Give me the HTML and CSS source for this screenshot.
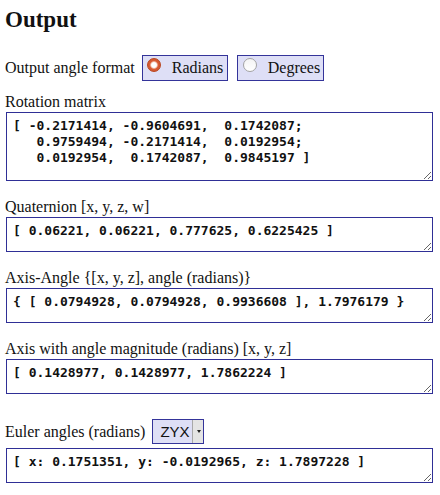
FILE: index.html
```html
<!DOCTYPE html>
<html lang="en">
<head>
<meta charset="utf-8">
<title>Output</title>
<link rel="stylesheet" href="styles.css">
</head>
<body>
<h1 class="title">Output</h1>
<div class="angle-row">
  <span class="row-label">Output angle format</span>
  <label class="opt"><span class="radio checked"></span><span class="opt-text">Radians</span></label>
  <label class="opt"><span class="radio"></span><span class="opt-text">Degrees</span></label>
</div>

<div class="field first">
  <div class="lbl">Rotation matrix</div>
  <textarea class="out tall" spellcheck="false">[ -0.2171414, -0.9604691,  0.1742087;
   0.9759494, -0.2171414,  0.0192954;
   0.0192954,  0.1742087,  0.9845197 ]</textarea>
</div>

<div class="field">
  <div class="lbl">Quaternion [x, y, z, w]</div>
  <textarea class="out" spellcheck="false">[ 0.06221, 0.06221, 0.777625, 0.6225425 ]</textarea>
</div>

<div class="field">
  <div class="lbl">Axis-Angle {[x, y, z], angle (radians)}</div>
  <textarea class="out" spellcheck="false">{ [ 0.0794928, 0.0794928, 0.9936608 ], 1.7976179 }</textarea>
</div>

<div class="field">
  <div class="lbl">Axis with angle magnitude (radians) [x, y, z]</div>
  <textarea class="out" spellcheck="false">[ 0.1428977, 0.1428977, 1.7862224 ]</textarea>
</div>

<div class="field euler">
  <div class="euler-row">
    <span class="row-label">Euler angles (radians)</span>
    <span class="select-wrap"><select class="order"><option>ZYX</option><option>XYZ</option></select></span>
  </div>
  <textarea class="out" spellcheck="false">[ x: 0.1751351, y: -0.0192965, z: 1.7897228 ]</textarea>
</div>
</body>
</html>
```
FILE: styles.css
```css
html, body {
  margin: 0;
  padding: 0;
  background: #ffffff;
}
body {
  padding: 0 5px;
  font-family: "Liberation Serif", "DejaVu Serif", serif;
  font-size: 16px;
  color: #111111;
}
.title {
  margin: 7px 0 0;
  font-family: "Liberation Serif", "DejaVu Serif", serif;
  font-size: 23px;
  line-height: 25px;
  font-weight: bold;
}
.angle-row {
  display: flex;
  align-items: center;
  margin-top: 23px;
  height: 26px;
}
.row-label {
  line-height: 18px;
  font-family: "Liberation Serif", "DejaVu Serif", serif;
}
.opt {
  display: flex;
  align-items: center;
  box-sizing: border-box;
  height: 26px;
  background: #dedff6;
  border: 1px solid #34349a;
  line-height: 18px;
  font-family: "Liberation Serif", "DejaVu Serif", serif;
  font-size: 16px;
}
.opt-text {
  font-family: "Liberation Serif", "DejaVu Serif", serif;
}
.angle-row .opt:first-of-type {
  margin-left: 7px;
  width: 86px;
  padding-left: 4px;
}
.angle-row .opt + .opt {
  margin-left: 9px;
  width: 87px;
  padding-left: 5px;
}
.radio {
  display: inline-block;
  box-sizing: border-box;
  width: 14px;
  height: 14px;
  border-radius: 50%;
  margin-right: 11px;
  margin-top: -6px;
  border: 1px solid #a3a3a3;
  background: linear-gradient(#f4f4f4, #ffffff);
}
.radio.checked {
  border-color: #b9451f;
  background: radial-gradient(circle, #ffffff 0 2.4px, #f1c7b6 3.2px, #dc5e36 4.2px, #c9532c 7px);
}
.field {
  margin-top: 17px;
}
.field.first {
  margin-top: 12px;
}
.lbl {
  line-height: 18px;
}
.out {
  display: block;
  box-sizing: border-box;
  width: 427px;
  height: 35px;
  margin: 1px 0 0 1px;
  padding: 5px 6px 3px;
  border: 1px solid #2f2f96;
  border-radius: 0;
  background: #ffffff;
  font-family: "DejaVu Sans Mono", "Liberation Mono", monospace;
  font-weight: bold;
  font-size: 13px;
  line-height: 16px;
  color: #111111;
  white-space: pre;
  overflow: hidden;
  outline: none;
}
.out.tall {
  height: 69px;
  margin-top: 1px;
}
.field.euler {
  margin-top: 25px;
}
.euler-row {
  display: flex;
  align-items: center;
  height: 25px;
}
.select-wrap {
  position: relative;
  display: inline-block;
  margin-left: 7px;
  height: 25px;
}
.order {
  appearance: none;
  -webkit-appearance: none;
  box-sizing: border-box;
  width: 52px;
  height: 25px;
  margin: 0;
  padding: 0 0 0 7px;
  border: 1px solid #34349a;
  border-radius: 0;
  background: linear-gradient(to left, #e4e4e4 0 10px, #a8a8a8 10px 11px, #dedff6 11px);
  font-family: "Liberation Sans", Arial, sans-serif;
  font-size: 15px;
  color: #111111;
  outline: none;
}
.select-wrap::after {
  content: "";
  position: absolute;
  right: 3px;
  top: 11px;
  border-left: 2.5px solid transparent;
  border-right: 2.5px solid transparent;
  border-top: 3px solid #222222;
}
.euler .out {
  margin-top: 4px;
}
```
